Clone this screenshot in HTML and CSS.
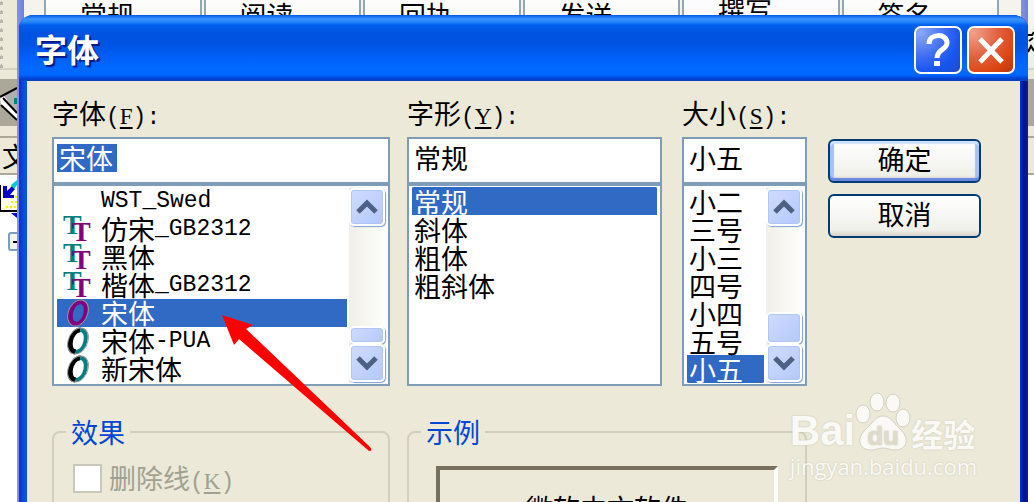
FILE: index.html
```html
<!DOCTYPE html>
<html lang="zh-CN">
<head>
  <meta charset="UTF-8">
  <meta name="viewport" content="width=device-width, initial-scale=1.0">
  <title>字体</title>
  <link rel="stylesheet" href="styles.css">
</head>
<body>

  <!-- Windows behind the dialog -->
  <div class="desktop">
    <div class="side side-left">
      <div class="side-tools grip"></div>
      <div class="side-band">
        <svg width="17" height="46" viewBox="0 0 17 46">
          <path d="M0 18L17 9V41L1 26Z" fill="#fff"/>
          <path d="M4 17L17 10V34Z" fill="#b0b0b0"/>
          <path d="M0 18L17 9M1 26L17 41M3 19L17 34" stroke="#000" stroke-width="2" fill="none"/>
          <rect x="14" y="19" width="3" height="6" fill="#008080"/>
        </svg>
      </div>
      <div class="side-head"><span>文</span></div>
      <div class="side-tree">
        <svg width="17" height="80" viewBox="0 0 17 80">
          <rect x="0" y="10" width="17" height="26" fill="#fffde0"/>
          <path d="M0 10V36H17" stroke="#000" stroke-width="2" fill="none"/>
          <path d="M6 32H17M11 27H17M11 22H17" stroke="#ffee00" stroke-width="2" stroke-dasharray="2 2"/>
          <path d="M3 11V23H14V20H10L15 14L12 11L7 16V11Z" fill="#0000c8"/>
          <path d="M11 10L17 5V10L14 14Z" fill="#00c8e0"/>
          <path d="M11 38H17V43Z" fill="#0000c8"/>
          <rect x="9" y="58" width="16" height="17" rx="2" fill="#f4f2ea" stroke="#7b9ebd" stroke-width="2"/>
          <path d="M13 67H17" stroke="#000" stroke-width="2"/>
        </svg>
      </div>
    </div>
    <div class="frame"></div>
    <div class="tabs">
      <div class="tab">常规</div>
      <div class="tab">阅读</div>
      <div class="tab">回执</div>
      <div class="tab">发送</div>
      <div class="tab tab-active">撰写</div>
      <div class="tab">签名</div>
    </div>
    <div class="frame"></div>
    <div class="side side-right">
      <div class="side-tools">
        <svg width="6" height="60" viewBox="0 0 6 60">
          <path d="M0 35H4L6 32M1 41L5 38M0 52L3 46L6 51" stroke="#000" stroke-width="2" fill="none"/>
        </svg>
      </div>
      <div class="side-band"></div>
      <div class="side-head"></div>
      <div class="side-tree"></div>
    </div>
  </div>

  <!-- Font dialog -->
  <main class="dialog">
    <header class="titlebar">
      <h1>字体</h1>
      <button class="caption-btn help" type="button" aria-label="帮助">
        <svg width="48" height="48" viewBox="0 0 48 48">
          <path d="M15 18C15 7 33 7 33 17C33 24 23 23 23 32" fill="none" stroke="#fff" stroke-width="5"/>
          <rect x="20" y="35" width="6" height="5" fill="#fff"/>
        </svg>
      </button>
      <button class="caption-btn close" type="button" aria-label="关闭">
        <svg width="48" height="48" viewBox="0 0 48 48">
          <path d="M13 13L35 36M35 13L13 36" stroke="#fff" stroke-width="5"/>
        </svg>
      </button>
    </header>

    <form class="content">
      <div class="field">
        <label for="font-name">字体<span class="latin">(<u>F</u>):</span></label>
        <div class="textbox"><input id="font-name" class="picked" type="text" value="宋体"></div>
        <div class="listbox">
          <ul class="fonts" role="listbox" aria-label="字体">
            <li role="option"><svg class="icon"></svg><span class="latin">WST_Swed</span></li>
            <li role="option"><svg class="icon"><use href="#truetype"/></svg>仿宋<span class="latin">_GB2312</span></li>
            <li role="option"><svg class="icon"><use href="#truetype"/></svg>黑体</li>
            <li role="option"><svg class="icon"><use href="#truetype"/></svg>楷体<span class="latin">_GB2312</span></li>
            <li role="option" class="selected" aria-selected="true"><svg class="icon"><use href="#opentype"/></svg>宋体</li>
            <li role="option"><svg class="icon"><use href="#opentype"/></svg>宋体<span class="latin">-PUA</span></li>
            <li role="option"><svg class="icon"><use href="#opentype"/></svg>新宋体</li>
          </ul>
          <div class="scrollbar">
            <button class="scroll-btn" type="button" aria-label="向上"><svg width="22" height="16"><use href="#up"/></svg></button>
            <div class="track"><div class="thumb thumb-short"></div></div>
            <button class="scroll-btn" type="button" aria-label="向下"><svg width="22" height="16"><use href="#down"/></svg></button>
          </div>
        </div>
        <svg class="pointer" width="152" height="140" viewBox="0 0 152 140">
          <path d="M1 1L32 11L25 15L149 133Q152 137 148 137L18 25L13 31Z" fill="#f00"/>
        </svg>
      </div>

      <div class="field field-style">
        <label for="font-style">字形<span class="latin">(<u>Y</u>):</span></label>
        <div class="textbox"><input id="font-style" type="text" value="常规"></div>
        <div class="listbox">
          <select size="7" aria-label="字形">
            <option selected>常规</option>
            <option>斜体</option>
            <option>粗体</option>
            <option>粗斜体</option>
          </select>
        </div>
      </div>

      <div class="field">
        <label for="font-size">大小<span class="latin">(<u>S</u>):</span></label>
        <div class="textbox"><input id="font-size" type="text" value="小五"></div>
        <div class="listbox">
          <select size="7" aria-label="大小">
            <option>小二</option>
            <option>三号</option>
            <option>小三</option>
            <option>四号</option>
            <option>小四</option>
            <option>五号</option>
            <option selected>小五</option>
          </select>
          <div class="scrollbar">
            <button class="scroll-btn" type="button" aria-label="向上"><svg width="22" height="16"><use href="#up"/></svg></button>
            <div class="track"><div class="thumb"></div></div>
            <button class="scroll-btn" type="button" aria-label="向下"><svg width="22" height="16"><use href="#down"/></svg></button>
          </div>
        </div>
      </div>

      <div class="actions">
        <button class="btn btn-default" type="button">确定</button>
        <button class="btn" type="button">取消</button>
      </div>

      <fieldset class="effects">
        <legend>效果</legend>
        <input id="strike" type="checkbox" disabled>
        <label for="strike">删除线<span class="latin">(<u>K</u>)</span></label>
      </fieldset>

      <fieldset class="sample">
        <legend>示例</legend>
        <div class="preview">微软中文软件</div>
      </fieldset>
    </form>
  </main>

  <!-- Watermark -->
  <div class="watermark">
    <div class="brand">
      <span class="bai">Bai</span>
      <span class="paw">
        <svg width="56" height="61" viewBox="0 0 56 61">
          <g fill="#faf9f5" stroke="#d3d0c2" stroke-width="1">
            <ellipse cx="8" cy="24" rx="7" ry="9"/>
            <ellipse cx="22" cy="12" rx="7" ry="9"/>
            <ellipse cx="38" cy="13" rx="7" ry="9"/>
            <ellipse cx="48" cy="28" rx="7" ry="9"/>
            <path d="M28 26C36 26 39 34 46 40C55 49 52 60 40 60C35 60 33 58 28 58C23 58 21 60 16 60C4 60 1 49 10 40C17 34 20 26 28 26Z"/>
          </g>
        </svg>
        <span class="du">du</span>
      </span>
      <span class="cn">经验</span>
    </div>
    <div class="site">jingyan.baidu.com</div>
  </div>

  <!-- Shared icons -->
  <svg class="defs">
    <symbol id="truetype" viewBox="0 0 30 30">
      <text x="1" y="20" class="tt tt-back">T</text>
      <text x="10" y="27" class="tt tt-front">T</text>
    </symbol>
    <symbol id="opentype" viewBox="0 0 30 30">
      <g fill="none" stroke-width="5" transform="translate(16 15) skewX(-12)">
        <path class="o-left" d="M0 -11C-10 -11 -10 11 0 11"/>
        <path class="o-right" stroke-width="4" d="M0 -11C10 -11 10 11 0 11"/>
        <ellipse rx="10" ry="13" stroke="#999" stroke-width="1"/>
      </g>
    </symbol>
    <symbol id="up" viewBox="0 0 22 16">
      <path d="M2 13L11 4L20 13" fill="none" stroke="#4d6185" stroke-width="5"/>
    </symbol>
    <symbol id="down" viewBox="0 0 22 16">
      <path d="M2 3L11 12L20 3" fill="none" stroke="#4d6185" stroke-width="5"/>
    </symbol>
  </svg>

</body>
</html>
```
FILE: styles.css
```css
* {
  margin: 0;
  padding: 0;
  box-sizing: border-box;
}

body {
  display: grid;
  grid-template-rows: 100vh;
  height: 100vh;
  overflow: hidden;
  font-family: "Noto Sans CJK SC", sans-serif;
  font-size: 27px;
  line-height: 28px;
  color: #000;
  background-color: #fff;
}

button,
input,
select {
  font: inherit;
  color: inherit;
}

.latin {
  font-family: "Liberation Mono", monospace;
  font-size: 23px;
}

.latin u {
  font-family: "Liberation Serif", serif;
  text-underline-offset: 3px;
}

.defs {
  position: absolute;
  width: 0;
  height: 0;
}

/* Desktop behind the dialog */
.desktop {
  grid-area: 1 / 1;
  display: flex;
  min-width: 0;
  overflow: hidden;
}

.side {
  overflow: hidden;
  background: #ece9d8;
}

.side-left {
  width: 17px;
}

.side-right {
  width: 6px;
}

.side-tools {
  height: 70px;
  border-bottom: 2px solid #d5d2c1;
  background: linear-gradient(#f7f7f3, #eeede5);
}

.grip {
  background-image: radial-gradient(circle, #b8b6aa 2px, transparent 2px);
  background-size: 9px 9px;
  background-position: -3px -1px;
  background-repeat: repeat-y;
}

.side-band {
  height: 47px;
  margin-top: 9px;
  background: #aca899;
}

.side-head {
  height: 39px;
  margin-top: 10px;
  padding: 4px 0 0 2px;
  overflow: hidden;
  border-top: 2px solid #aca899;
  border-bottom: 2px solid #aca899;
}

.side-tree {
  height: 100%;
  background: #fff;
}

.frame {
  width: 7px;
  background: linear-gradient(90deg, #8592e4, #7080da);
}

.tabs {
  display: flex;
  flex: 1;
  padding: 0 20px;
  background: #f4f3ec;
}

.tab {
  flex: 1;
  height: 40px;
  padding: 1px 0 0 34px;
  border: 2px solid #91a7b4;
  border-top: 0;
  margin-right: 2px;
  background: linear-gradient(#fefefe, #f0f0ea);
}

.tab-active {
  padding-top: 0;
  line-height: 22px;
  background: #fcfcfe;
}

/* Dialog window */
.dialog {
  grid-area: 1 / 1;
  z-index: 1;
  min-width: 0;
  margin: 15px 6px 0 19px;
  padding: 0 8px;
  overflow: hidden;
  border-radius: 14px 14px 0 0;
  background: linear-gradient(90deg, #0831d9, #0855dd 6px, #0855dd 8px, #0855dd 50%, #0831d9 calc(100% - 8px), #00138c calc(100% - 4px), #001ea0);
}

.titlebar {
  display: flex;
  align-items: center;
  gap: 5px;
  height: 66px;
  margin: 0 -8px;
  padding: 4px 13px 0 16px;
  border-radius: 14px 14px 0 0;
  background: linear-gradient(#0058e6, #3a93ff 4px, #2684fa 7px, #0060ef 10px, #0053df 18px, #0054e3 30px, #0062fb 44px, #006aff 54px, #0066fc 60px, #0040cf 64px, #0842c0);
}

.titlebar h1 {
  flex: 1;
  padding-bottom: 4px;
  font-size: 32px;
  line-height: 40px;
  color: #fff;
  text-shadow: 2px 2px 1px #0a1883;
}

.caption-btn {
  width: 48px;
  height: 48px;
  border: 2px solid #fff;
  border-radius: 7px;
}

.caption-btn svg {
  display: block;
  margin: -2px;
}

.help {
  background: radial-gradient(circle at 10% 10%, #8ba9f5, #3c6cf2 45%, #1756f0 70%, #1c4bcc);
}

.close {
  background: radial-gradient(circle at 10% 10%, #eea38c, #e25f3d 45%, #dc4512 75%, #b93410);
}

.content {
  display: grid;
  grid-template-columns: 338fr 258fr 125fr 157fr;
  column-gap: 17px;
  row-gap: 32px;
  padding: 16px 39px 0 25px;
  background: #ece9d8;
}

/* Text box over list box */
.field {
  position: relative;
  min-width: 0;
}

.field-style {
  padding-right: 3px;
}

.field > label {
  display: block;
  height: 40px;
  line-height: 32px;
  white-space: nowrap;
}

.textbox {
  height: 47px;
  padding: 5px 3px;
  border: 2px solid #7f9db9;
  background: #fff;
}

.textbox input {
  display: block;
  width: 100%;
  height: 28px;
  padding-left: 2px;
  border: 0;
  outline: 0;
  background: transparent;
}

.textbox .picked {
  width: 60px;
  color: #fff;
  background: #316ac5;
}

.listbox {
  display: flex;
  gap: 2px;
  height: 202px;
  padding: 1px 3px;
  border: 2px solid #7f9db9;
  background: #fff;
}

.listbox ul,
.listbox select {
  flex: 1;
  min-width: 0;
  overflow: hidden;
  border: 0;
  outline: 0;
  list-style: none;
  background: #fff;
  scrollbar-width: none;
}

.listbox option {
  display: flex;
  align-items: center;
  height: 28px;
  min-height: 28px;
  padding: 0 2px;
}

.listbox option:checked {
  color: #fff;
  background: #316ac5 linear-gradient(#316ac5, #316ac5);
}

.fonts li {
  display: flex;
  align-items: center;
  height: 28px;
  padding-left: 5px;
}

.fonts .selected {
  color: #fff;
  background: #316ac5;
}

.icon {
  --o-left: #000;
  --o-right: #008080;
  flex: none;
  width: 30px;
  height: 30px;
  margin-right: 9px;
}

.selected .icon {
  --o-left: #800080;
  --o-right: #800080;
}

.tt {
  font: bold 28px "Liberation Serif", serif;
}

.tt-back {
  fill: #008080;
}

.tt-front {
  fill: #800080;
}

.o-left {
  stroke: var(--o-left);
}

.o-right {
  stroke: var(--o-right);
}

.scrollbar {
  display: flex;
  flex-direction: column;
  width: 36px;
  padding: 1px 0;
  background: linear-gradient(90deg, #f0efe8, #fefefb);
}

.scroll-btn,
.thumb {
  border: 2px solid #fff;
  border-radius: 5px;
  background: linear-gradient(135deg, #cfdcff, #b4c8fb);
  box-shadow: inset 0 0 0 1px #b3c5f5, 1px 1px 1px #7d9fd3;
}

.scroll-btn {
  display: flex;
  align-items: center;
  justify-content: center;
  flex: none;
  height: 38px;
}

.track {
  display: flex;
  flex: 1;
  flex-direction: column;
  justify-content: flex-end;
}

.thumb {
  height: 32px;
}

.thumb-short {
  height: 18px;
}

/* Red arrow over the font list */
.pointer {
  position: absolute;
  top: 217px;
  left: 169px;
}

/* Buttons */
.actions {
  display: flex;
  flex-direction: column;
  gap: 11px;
  padding: 42px 0 0 4px;
}

.btn {
  height: 44px;
  padding-bottom: 4px;
  border: 2px solid #003c74;
  border-radius: 6px;
  background: linear-gradient(#fff, #f0f0ea 85%, #d8d3c8);
}

.btn-default {
  box-shadow: inset 0 3px 1px #cfe2fd, inset 0 -3px 1px #6a87e0, inset 4px 0 1px #a8c2f0, inset -4px 0 1px #a8c2f0;
}

/* Group boxes */
fieldset {
  min-width: 0;
  height: 200px;
  padding: 0 19px;
  border: 2px solid #d0d0bf;
  border-radius: 8px;
}

legend {
  margin-left: -7px;
  padding: 0 5px;
  color: #0046d5;
}

.effects {
  display: flex;
}

.effects input {
  appearance: none;
  width: 29px;
  height: 29px;
  margin: 18px 7px 0 0;
  border: 2px solid #cac8bb;
  background: #fff;
}

.effects label {
  margin-top: 18px;
  color: #a1a192;
}

.sample {
  grid-column: 2 / 4;
  padding: 0 27px;
}

.sample legend {
  margin-left: -15px;
}

.preview {
  height: 120px;
  margin-top: 20px;
  padding-top: 24px;
  border: 4px solid;
  border-color: #77705f #fff #fff #77705f;
  text-align: center;
}

/* Watermark */
.watermark {
  position: absolute;
  top: 390px;
  right: 57px;
  z-index: 2;
  color: #faf9f5;
  text-shadow: 0 0 2px #c4c1b2;
}

.brand {
  display: flex;
  align-items: flex-end;
  height: 62px;
}

.bai {
  font: bold 42px/42px "Liberation Sans", sans-serif;
}

.paw {
  position: relative;
  height: 62px;
}

.du {
  position: absolute;
  top: 31px;
  left: 12px;
  font: bold 26px/30px "Liberation Sans", sans-serif;
  color: #dedbcb;
}

.cn {
  font-size: 32px;
  font-weight: bold;
  line-height: 38px;
}

.site {
  font: 22px/28px "Open Sans", sans-serif;
}
```
